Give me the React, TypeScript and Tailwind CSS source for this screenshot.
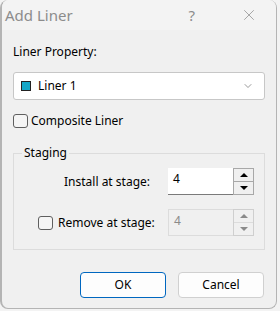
import { ChevronDown, X } from "lucide-react";

const font = { fontFamily: '"Segoe UI", "Noto Sans", sans-serif' };

function Check({ className = "" }: { className?: string }) {
  return <span className={`block w-[15px] h-[14px] rounded-[3px] border border-[#5f5f5f] bg-[#f5f5f5] ${className}`} />;
}

function Spin({ value, disabled = false }: { value: string; disabled?: boolean }) {
  return (
    <div className="flex h-[27px]">
      <div
        className={`w-[65px] pl-[5px] pt-[2px] text-[12px] border-b ${
          disabled ? "bg-[#f0f0f0] text-[#8a8a8a] border-[#dcdcdc] border-l border-t" : "bg-white text-black border-[#7a7a7a]"
        }`}
      >
        {value}
      </div>
      <div className={`w-[21px] flex flex-col border ${disabled ? "border-[#cfcfcf]" : "border-[#a8a8a8]"}`}>
        <div className={`flex-1 flex items-center justify-center border-b ${disabled ? "border-[#dcdcdc]" : "border-[#a8a8a8]"}`}>
          <span className={`w-0 h-0 border-x-[4px] border-x-transparent border-b-[4px] ${disabled ? "border-b-[#8a8a8a]" : "border-b-black"}`} />
        </div>
        <div className="flex-1 flex items-center justify-center">
          <span className={`w-0 h-0 border-x-[4px] border-x-transparent border-t-[4px] ${disabled ? "border-t-[#8a8a8a]" : "border-t-black"}`} />
        </div>
      </div>
    </div>
  );
}

export default function App() {
  return (
    <div className="w-[280px] h-[311px] bg-[#f3f3f3] text-black" style={font}>
      <div className="w-[277px] h-[309px] rounded-[8px] border-l-2 border-r border-b border-[#b4b4b4] bg-[#f0f0f0] flex flex-col overflow-hidden">
        <div className="h-[30px] bg-[#f3f3f3] flex items-center shrink-0">
          <span className="pl-[3px] text-[15px] text-[#8c8c8c]">Add Liner</span>
          <span className="ml-auto mr-[45px] text-[15px] text-[#8c8c8c]">?</span>
          <X className="mr-[18px] text-[#8c8c8c]" size={18} strokeWidth={1} />
        </div>
        <div className="flex-1 flex flex-col px-[11px] text-[12px]">
          <div className="pt-[13px] h-[42px]">Liner Property:</div>
          <div className="h-[28px] bg-white border border-[#c7c7c7] rounded-[3px] flex items-center px-[7px]">
            <span className="w-[10px] h-[10px] bg-[#15a7c7] border border-[#222]" />
            <span className="ml-[7px]">Liner 1</span>
            <ChevronDown className="ml-auto mr-[3px] text-[#555]" size={12} strokeWidth={1.2} />
          </div>
          <div className="flex items-center mt-[13px] h-[16px]">
            <Check />
            <span className="ml-[3px]">Composite Liner</span>
          </div>
          <fieldset className="mt-[15px] border border-[#dcdcdc] h-[106px] pl-[23px] pr-[10px]">
            <legend className="ml-[-15px] px-[2px]">Staging</legend>
            <div className="flex items-center mt-[6px]">
              <span className="w-[131px] text-right pr-[18px]">Install at stage:</span>
              <Spin value="4" />
            </div>
            <div className="flex items-center mt-[14px]">
              <Check className="ml-[1px]" />
              <span className="ml-[5px] w-[110px]">Remove at stage:</span>
              <Spin value="4" disabled />
            </div>
          </fieldset>
          <div className="mt-auto mb-[10px] flex justify-end gap-[12px] pr-[1px]">
            <button className="w-[86px] h-[26px] rounded-[4px] border border-[#0067c0] bg-[#fdfdfd] text-[12px]">OK</button>
            <button className="w-[86px] h-[26px] rounded-[4px] border border-[#d0d0d0] bg-[#fdfdfd] text-[12px]">Cancel</button>
          </div>
        </div>
      </div>
    </div>
  );
}
